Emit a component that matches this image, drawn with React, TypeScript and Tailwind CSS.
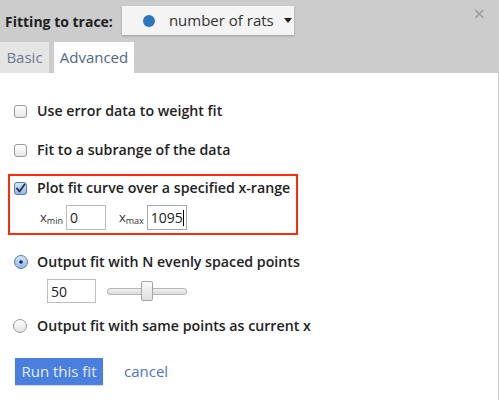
import React from "react";

const font = { fontFamily: '"Open Sans", "Liberation Sans", sans-serif' };

function CheckBox({ checked }: { checked?: boolean }) {
  return (
    <svg width="13" height="13" viewBox="0 0 13 13" className="shrink-0">
      <defs>
        <linearGradient id={checked ? "cbOn" : "cbOff"} x1="0" y1="0" x2="0" y2="1">
          {checked ? (
            <>
              <stop offset="0" stopColor="#d6e6fb" />
              <stop offset="1" stopColor="#8fb6ea" />
            </>
          ) : (
            <>
              <stop offset="0" stopColor="#ffffff" />
              <stop offset="1" stopColor="#e6e6e6" />
            </>
          )}
        </linearGradient>
      </defs>
      <rect x="0.5" y="0.5" width="12" height="12" rx="2.5" fill={`url(#${checked ? "cbOn" : "cbOff"})`} stroke={checked ? "#5a7aa8" : "#9a9a9a"} />
      {checked && <path d="M3 6.5 L5.5 9.5 L10.5 2.5" fill="none" stroke="#1e2c46" strokeWidth="1.8" strokeLinecap="round" strokeLinejoin="round" />}
    </svg>
  );
}

function Radio({ checked }: { checked?: boolean }) {
  return (
    <svg width="14" height="14" viewBox="0 0 14 14" className="shrink-0">
      <defs>
        <linearGradient id={checked ? "rOn" : "rOff"} x1="0" y1="0" x2="0" y2="1">
          {checked ? (
            <>
              <stop offset="0" stopColor="#d6e6fb" />
              <stop offset="1" stopColor="#8fb6ea" />
            </>
          ) : (
            <>
              <stop offset="0" stopColor="#ffffff" />
              <stop offset="1" stopColor="#e2e2e2" />
            </>
          )}
        </linearGradient>
      </defs>
      <circle cx="7" cy="7" r="6.5" fill={`url(#${checked ? "rOn" : "rOff"})`} stroke={checked ? "#5a7aa8" : "#9a9a9a"} />
      {checked && <circle cx="7" cy="7" r="1.8" fill="#1e2c46" />}
    </svg>
  );
}

export default function App() {
  return (
    <div className="w-[499px] h-[400px] bg-[#cccccc] flex flex-col overflow-hidden" style={font}>
      <div className="h-[42px] flex items-start relative">
        <div className="mt-[12px] ml-[5px] text-[14px] font-bold text-[#1e1e1e] leading-[20px]">Fitting to trace:</div>
        <div className="ml-[9px] mt-[6px] w-[172px] h-[29px] bg-[#f4f4f4] shadow-[0_1px_2px_rgba(0,0,0,0.25)] flex items-center">
          <span className="ml-[21px] w-[12px] h-[12px] rounded-full bg-[#2a77c0]" />
          <span className="ml-[14px] text-[15px] text-[#333]">number of rats</span>
          <svg width="8" height="5" viewBox="0 0 8 5" className="ml-[10px]">
            <path d="M0 0 L8 0 L4 5 Z" fill="#222" />
          </svg>
        </div>
        <div className="absolute right-[14px] top-[4px] text-[20px] text-[#9a9a9a] leading-[20px]">×</div>
      </div>
      <div className="h-[31px] flex items-stretch">
        <div className="w-[49px] bg-[#e5e5e5] flex items-center justify-center text-[15px] text-[#6b7890]">Basic</div>
        <div className="ml-[5px] w-[80px] bg-white flex items-center justify-center text-[15px] text-[#506784]">Advanced</div>
      </div>
      <div className="flex-1 w-[498px] bg-white text-[14.2px] font-semibold text-[#222] flex flex-col">
        <div className="mt-[28px] ml-[14px] h-[20px] flex items-center gap-[10px]">
          <CheckBox />
          <span>Use error data to weight fit</span>
        </div>
        <div className="mt-[19px] ml-[14px] h-[20px] flex items-center gap-[10px]">
          <CheckBox />
          <span>Fit to a subrange of the data</span>
        </div>
        <div className="mt-[14px] ml-[8px] w-[290px] h-[61px] border-2 border-[#ff2a0a] flex flex-col">
          <div className="mt-[2px] ml-[4px] h-[20px] flex items-center gap-[10px]">
            <CheckBox checked />
            <span>Plot fit curve over a specified x-range</span>
          </div>
          <div className="mt-[7px] ml-[30px] flex items-center font-normal">
            <span className="text-[13px] text-[#333]">x<sub className="text-[9px]">min</sub></span>
            <div className="ml-[3px] w-[40px] h-[25px] border border-[#bdbdbd] flex items-center pl-[3px] text-[14px] text-[#222]">0</div>
            <span className="ml-[13px] text-[13px] text-[#333]">x<sub className="text-[9px]">max</sub></span>
            <div className="ml-[3px] w-[40px] h-[25px] border border-[#9aa8c4] flex items-center pl-[3px] text-[14px] text-[#222]">
              1095<span className="w-px h-[16px] bg-black" />
            </div>
          </div>
        </div>
        <div className="mt-[17px] ml-[14px] h-[20px] flex items-center gap-[9px]">
          <Radio checked />
          <span>Output fit with N evenly spaced points</span>
        </div>
        <div className="mt-[7px] ml-[47px] flex items-center">
          <div className="w-[49px] h-[24px] border border-[#bdbdbd] flex items-center pl-[3px] text-[14px] font-normal">50</div>
          <div className="ml-[11px] relative w-[80px] h-[24px] flex items-center">
            <div className="w-[80px] h-[7px] rounded-[3px] border border-[#b5b5b5] bg-gradient-to-b from-[#f0f0f0] to-[#dcdcdc]" />
            <div className="absolute left-[34px] top-[2px] w-[12px] h-[20px] border border-[#a5a5a5] rounded-[2px] bg-gradient-to-b from-[#fafafa] to-[#dedede]" />
          </div>
        </div>
        <div className="mt-[13px] ml-[13px] h-[20px] flex items-center gap-[10px]">
          <Radio />
          <span>Output fit with same points as current x</span>
        </div>
        <div className="mt-[22px] ml-[15px] flex items-center">
          <div className="w-[88px] h-[27px] bg-[#4a7fe0] text-[#e6edfb] font-normal text-[15px] flex items-center justify-center shadow-[0_1px_1px_rgba(0,0,0,0.15)]">Run this fit</div>
          <div className="ml-[21px] text-[#4b73d4] font-normal text-[15px]">cancel</div>
        </div>
      </div>
    </div>
  );
}
